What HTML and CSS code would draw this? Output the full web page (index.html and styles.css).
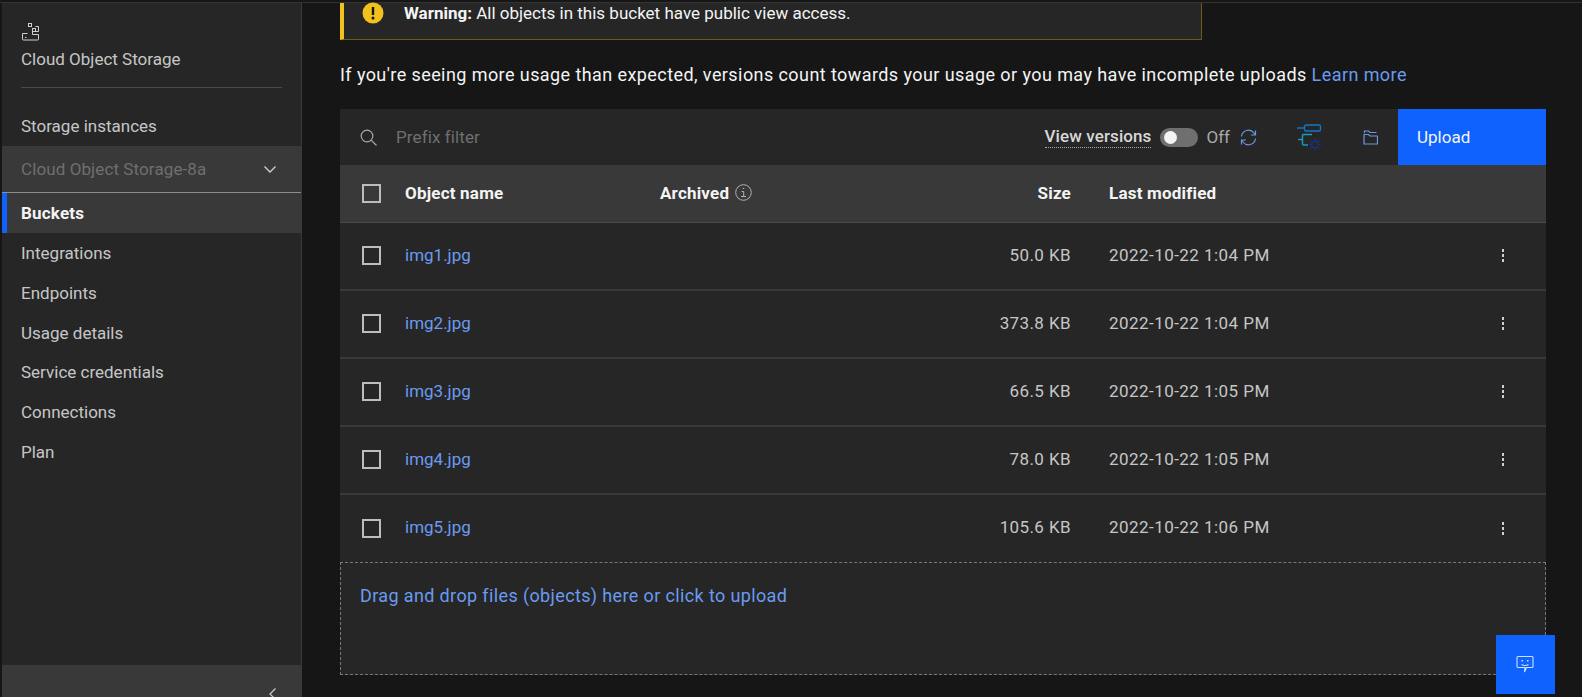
FILE: index.html
```html
<!DOCTYPE html>
<html lang="en">
<head>
    <meta charset="UTF-8">
    <title>Cloud Object Storage</title>
    <link rel="stylesheet" href="styles.css">
</head>
<body>
    <div class="top-line"></div>
    <div class="app">
        <aside class="sidebar">
            <div class="brand">
                <svg class="brand-icon" width="18" height="18" viewBox="0 0 18 18" fill="none" stroke="#d0d0d0" stroke-width="1">
                    <rect x="6.5" y="0.5" width="3" height="3"/>
                    <rect x="10.5" y="5.5" width="3" height="3"/>
                    <path d="M13.5 3.5h3v5h-3M10.5 8.5v3h6M0.5 10.5h5M0.5 10.5v5.5a1 1 0 0 0 1 1h14a1 1 0 0 0 1-1v-4.500M3 14.500h1.500"/>
                </svg>
                <div class="brand-name">Cloud Object Storage</div>
            </div>
            <div class="nav-link first-link">Storage instances</div>
            <div class="instance-select">
                <span>Cloud Object Storage-8a</span>
                <svg width="14" height="14" viewBox="0 0 14 14" fill="none" stroke="#d0d0d0" stroke-width="1.300"><path d="M1.500 4.500 7 10l5.500-5.500"/></svg>
            </div>
            <div class="nav-link active">Buckets</div>
            <div class="nav-link">Integrations</div>
            <div class="nav-link">Endpoints</div>
            <div class="nav-link">Usage details</div>
            <div class="nav-link">Service credentials</div>
            <div class="nav-link">Connections</div>
            <div class="nav-link">Plan</div>
            <div class="collapse-bar">
                <svg width="12" height="12" viewBox="0 0 12 12" fill="none" stroke="#c6c6c6" stroke-width="1.300"><path d="M8.500 0.500 3 6l5.500 5.500"/></svg>
            </div>
        </aside>

        <main class="content">
            <div class="warning">
                <svg class="warning-icon" width="22" height="22" viewBox="0 0 22 22">
                    <circle cx="11" cy="11" r="10.500" fill="#f1c21b"/>
                    <rect x="9.800" y="5" width="2.400" height="8" fill="#161616"/>
                    <circle cx="11" cy="16" r="1.500" fill="#161616"/>
                </svg>
                <p><strong>Warning:</strong> All objects in this bucket have public view access.</p>
            </div>

            <p class="usage-note">If you're seeing more usage than expected, versions count towards your usage or you may have incomplete uploads <a class="link" href="#">Learn more</a></p>

            <section class="objects">
                <div class="toolbar">
                    <svg class="search-icon" width="17" height="17" viewBox="0 0 17 17" fill="none" stroke="#a8a8a8" stroke-width="1.200"><circle cx="7" cy="7" r="5.800"/><path d="m11.200 11.200 5.300 5.300"/></svg>
                    <span class="filter-text">Prefix filter</span>
                    <span class="view-versions">View versions</span>
                    <span class="toggle"><span class="toggle-knob"></span></span>
                    <span class="toggle-label">Off</span>
                    <svg class="sync-icon" width="17" height="17" viewBox="0 0 17 17" fill="none" stroke="#6d97dc" stroke-width="1.200">
                        <path d="M1.500 7.500A7 7 0 0 1 14 4l1.500 2M15.500 1.500v4.500H11M15.500 9.500A7 7 0 0 1 3 13l-1.500-2M1.500 15.500V11H6"/>
                    </svg>
                    <svg class="flow-icon" width="25" height="27" viewBox="0 0 25 27" fill="none" stroke-width="1.400">
                        <rect x="7.500" y="1" width="16" height="6" rx="1.500" stroke="#1078c8"/>
                        <path d="M0 4h7" stroke="#1078c8"/>
                        <path d="M15 10.500H6.500a1 1 0 0 0-1 1V20a1 1 0 0 0 1 1H11" stroke="#12a0bc"/>
                        <path d="M1 15.500h4" stroke="#12a0bc"/>
                        <circle cx="18" cy="20.500" r="3.300" stroke="#1c2f78"/>
                        <path d="M18 14.500v2.500M18 24v2.500M12 20.500h2.500M21.500 20.500H24M13.800 16.300l1.800 1.800M20.400 22.900l1.800 1.800M22.200 16.300l-1.800 1.800M15.600 22.900l-1.800 1.800" stroke="#1c2f78"/>
                    </svg>
                    <svg class="folder-icon" width="15" height="15" viewBox="0 0 15 15" fill="none" stroke="#6d97dc" stroke-width="1.200">
                        <path d="M1.500 3V1h4l1.500 1.500h6.500M1 4.500h4.500l1.500 1.500h7.500v8H1z"/>
                    </svg>
                    <button class="upload-btn">Upload</button>
                </div>

                <div class="row head-row">
                    <span class="checkbox"></span>
                    <span class="col-name">Object name</span>
                    <span class="col-archived">Archived
                        <svg width="17" height="17" viewBox="0 0 17 17" fill="none" stroke="#b0b0b0" stroke-width="1"><circle cx="8.500" cy="8.500" r="7.800"/><path d="M6.500 7.500h2.200v5M6 12.500h5M7.800 4.500h1.400"/></svg>
                    </span>
                    <span class="col-size">Size</span>
                    <span class="col-date">Last modified</span>
                </div>

                <div class="row">
                    <span class="checkbox"></span>
                    <a class="col-name link" href="#">img1.jpg</a>
                    <span class="col-archived"></span>
                    <span class="col-size">50.0 KB</span>
                    <span class="col-date">2022-10-22 1:04 PM</span>
                    <span class="kebab"><i></i><i></i><i></i></span>
                </div>
                <div class="row">
                    <span class="checkbox"></span>
                    <a class="col-name link" href="#">img2.jpg</a>
                    <span class="col-archived"></span>
                    <span class="col-size">373.8 KB</span>
                    <span class="col-date">2022-10-22 1:04 PM</span>
                    <span class="kebab"><i></i><i></i><i></i></span>
                </div>
                <div class="row">
                    <span class="checkbox"></span>
                    <a class="col-name link" href="#">img3.jpg</a>
                    <span class="col-archived"></span>
                    <span class="col-size">66.5 KB</span>
                    <span class="col-date">2022-10-22 1:05 PM</span>
                    <span class="kebab"><i></i><i></i><i></i></span>
                </div>
                <div class="row">
                    <span class="checkbox"></span>
                    <a class="col-name link" href="#">img4.jpg</a>
                    <span class="col-archived"></span>
                    <span class="col-size">78.0 KB</span>
                    <span class="col-date">2022-10-22 1:05 PM</span>
                    <span class="kebab"><i></i><i></i><i></i></span>
                </div>
                <div class="row last-row">
                    <span class="checkbox"></span>
                    <a class="col-name link" href="#">img5.jpg</a>
                    <span class="col-archived"></span>
                    <span class="col-size">105.6 KB</span>
                    <span class="col-date">2022-10-22 1:06 PM</span>
                    <span class="kebab"><i></i><i></i><i></i></span>
                </div>

                <div class="dropzone">
                    <span class="link">Drag and drop files (objects) here or click to upload</span>
                </div>
            </section>
        </main>
    </div>

    <button class="chat-btn">
        <svg width="18" height="18" viewBox="0 0 18 18" fill="none" stroke="#cfe0ff" stroke-width="1.100">
            <path d="M2 1.500h14a1 1 0 0 1 1 1v9a1 1 0 0 1-1 1h-5.500L8.500 17l.5-4.500H2a1 1 0 0 1-1-1v-9a1 1 0 0 1 1-1z"/>
            <path d="M5.500 9.500q3.500 2 7 0"/>
            <path d="M5.500 5h1.500v1.500H5.500zM11 5h1.500v1.500H11z" fill="#cfe0ff" stroke="none"/>
        </svg>
    </button>
</body>
</html>
```

FILE: styles.css
```css
* {
    box-sizing: border-box;
}

html, body {
    height: 100%;
}

body {
    margin: 0;
    background: #161616;
    color: #f4f4f4;
    font-family: "Roboto", "Liberation Sans", sans-serif;
    font-size: 17px;
    overflow: hidden;
}

.top-line {
    height: 3px;
    border-bottom: 1px solid #333;
    background: #161616;
}

.app {
    display: flex;
    height: calc(100% - 3px);
    padding-left: 2px;
}

/* Sidebar */
.sidebar {
    width: 300px;
    flex-shrink: 0;
    display: flex;
    flex-direction: column;
    background: #262626;
    border-right: 1px solid #393939;
    color: #c6c6c6;
}

.brand {
    margin: 0 19px;
    padding-top: 20px;
    height: 85px;
    border-bottom: 1px solid #4a4a4a;
}

.brand-icon {
    display: block;
    margin-left: 1px;
}

.brand-name {
    margin-top: 8px;
    line-height: 20px;
}

.nav-link {
    height: 39.800px;
    line-height: 39.800px;
    padding-left: 19px;
}

.first-link {
    margin-top: 20px;
    height: 38px;
    line-height: 37px;
}

.instance-select {
    height: 47px;
    display: flex;
    align-items: center;
    justify-content: space-between;
    padding: 0 24px 0 19px;
    background: #393939;
    border-bottom: 1px solid #8d8d8d;
    color: #6f6f6f;
    letter-spacing: 0.1px;
}

.nav-link.active {
    height: 40px;
    line-height: 40px;
    margin-bottom: 1px;
    background: #393939;
    border-left: 5px solid #0f62fe;
    padding-left: 14px;
    color: #f4f4f4;
    font-weight: 700;
    letter-spacing: 0.2px;
}

.collapse-bar {
    margin-top: auto;
    height: 32px;
    background: #393939;
    padding: 23px 22px 0 0;
    overflow: hidden;
}

.collapse-bar svg {
    display: block;
    margin-left: auto;
}

/* Main column */
.content {
    flex: 1;
    min-width: 0;
    padding: 0 36px 0 38px;
}

.warning {
    width: 862px;
    height: 37px;
    display: flex;
    background: #262626;
    border-left: 4px solid #f1c21b;
    border-right: 1px solid #6b5a18;
    border-bottom: 1px solid #6b5a18;
    padding-left: 18px;
}

.warning-icon {
    margin-top: -1px;
}

.warning p {
    margin: 0 0 0 20px;
    line-height: 20px;
}

.usage-note {
    margin: 25px 0 0;
    font-size: 18px;
    line-height: 20px;
    letter-spacing: 0.42px;
}

.link {
    color: #6a9bf0;
    text-decoration: none;
}

/* Object table */
.objects {
    margin-top: 24px;
    width: 1206px;
}

.toolbar {
    height: 56px;
    display: flex;
    align-items: center;
    background: #262626;
    padding-left: 20px;
}

.filter-text {
    margin-left: 19px;
    color: #6f6f6f;
    letter-spacing: 0.1px;
}

.view-versions {
    margin-left: auto;
    font-weight: 500;
    color: #d8d8d8;
    letter-spacing: 0.1px;
    border-bottom: 1px dotted #a8a8a8;
    padding-bottom: 1px;
}

.toggle {
    width: 38px;
    height: 19px;
    margin-left: 9px;
    padding: 3px 4px;
    border-radius: 10px;
    background: #6f6f6f;
}

.toggle-knob {
    display: block;
    width: 13px;
    height: 13px;
    border-radius: 50%;
    background: #f4f4f4;
}

.toggle-label {
    margin-left: 8px;
    color: #a8a8a8;
}

.sync-icon {
    margin-left: 10px;
}

.flow-icon {
    margin-left: 40px;
}

.folder-icon {
    margin-left: 41px;
}

.upload-btn {
    width: 148px;
    height: 56px;
    margin-left: 20px;
    padding: 0 0 0 19px;
    border: none;
    background: #0f62fe;
    color: #f4f4f4;
    font: inherit;
    text-align: left;
}

.row {
    height: 68px;
    display: flex;
    align-items: center;
    background: #262626;
    border-bottom: 2px solid #393939;
    padding: 0 0 1px 22px;
    color: #c6c6c6;
}

.last-row {
    height: 67px;
    border-bottom: none;
}

.head-row {
    height: 58px;
    background: #393939;
    border-bottom: 1px solid #4a4a4a;
    padding-bottom: 0;
    color: #f4f4f4;
    font-weight: 700;
    letter-spacing: 0.2px;
}

.checkbox {
    width: 19px;
    height: 19px;
    flex-shrink: 0;
    border: 2px solid #bdbdbd;
}

.col-name,
.col-archived,
.col-size,
.col-date {
    padding-bottom: 2px;
}

.col-name {
    width: 255px;
    margin-left: 24px;
}

.col-archived {
    width: 295px;
    display: flex;
    align-items: center;
    gap: 6px;
}

.col-size {
    width: 116px;
    text-align: right;
    letter-spacing: 0.4px;
}

.col-date {
    margin-left: 38px;
    letter-spacing: 0.45px;
}

.head-row .col-size,
.head-row .col-date {
    letter-spacing: 0.2px;
}

.kebab {
    margin-left: auto;
    margin-right: 42px;
    display: flex;
    flex-direction: column;
    gap: 2px;
}

.kebab i {
    display: block;
    width: 2px;
    height: 3px;
    background: #d0d0d0;
}

.dropzone {
    height: 113px;
    padding: 22px 19px 0;
    background: #262626;
    border: 1px dashed #777;
    font-size: 18px;
    letter-spacing: 0.37px;
}

.chat-btn {
    position: fixed;
    left: 1496px;
    top: 635px;
    width: 59px;
    height: 59px;
    padding: 0 2px 1px 0;
    border: none;
    background: #0f62fe;
    display: flex;
    align-items: center;
    justify-content: center;
}
```
